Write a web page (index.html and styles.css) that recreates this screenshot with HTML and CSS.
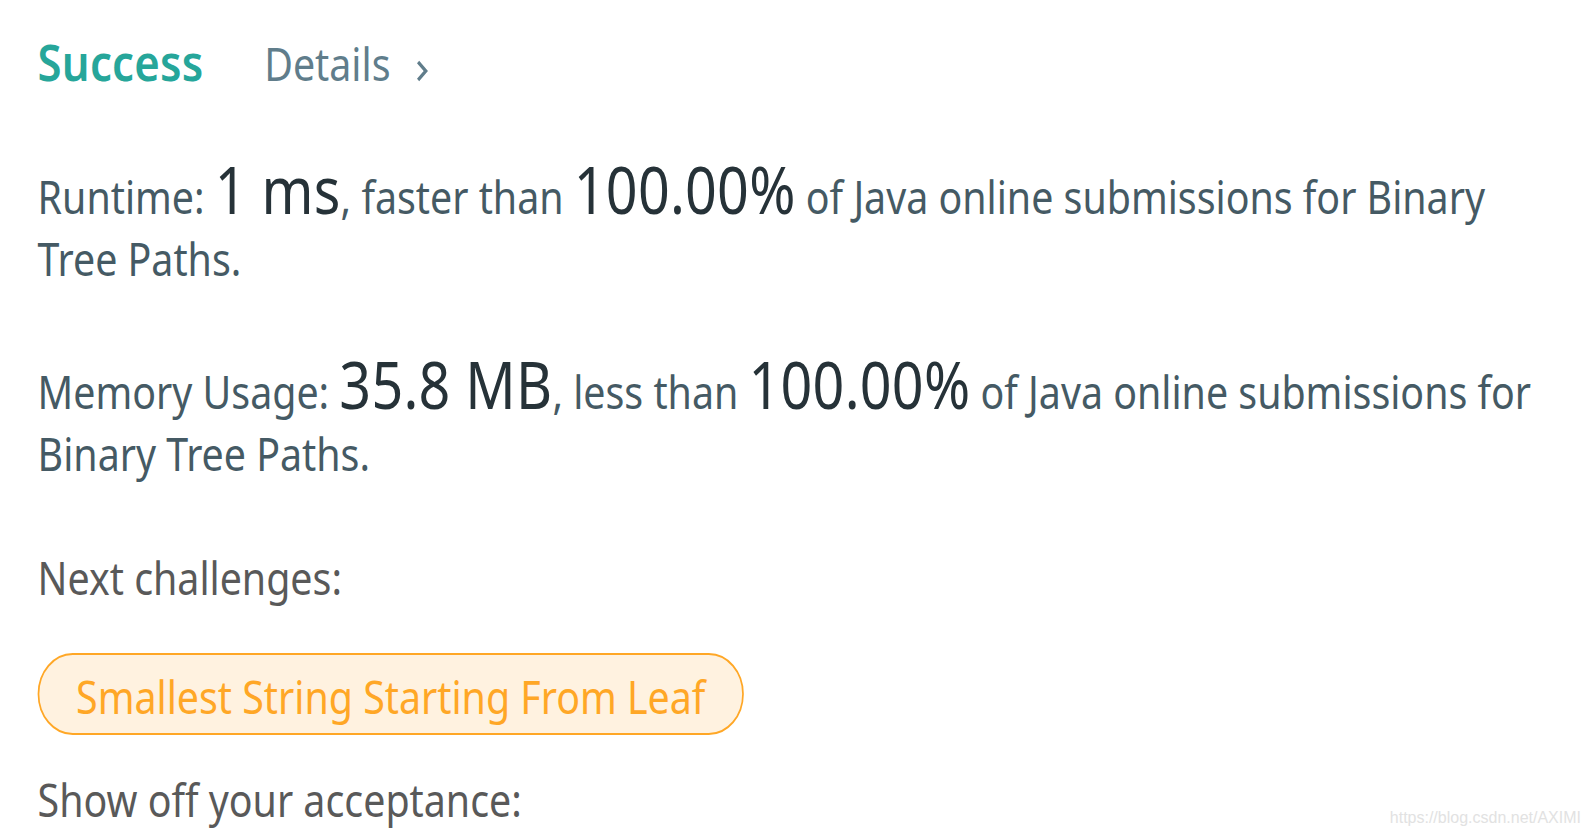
FILE: index.html
```html
<!DOCTYPE html>
<html lang="en">
<head>
  <meta charset="UTF-8">
  <title>Submission Result</title>
  <link rel="stylesheet" href="styles.css">
</head>
<body>
  <div class="frame">
  <div class="result">
    <div class="result-head">
      <span class="status">Success</span>
      <a class="details" href="#">Details
        <svg class="chevron" viewBox="0 0 16 22" width="16" height="22">
          <path d="M3 2 L12 11 L3 20" fill="none" stroke="currentColor" stroke-width="3.6"/>
        </svg>
      </a>
    </div>

    <p class="stat">Runtime: <span class="num">1 ms</span>, faster than <span class="num">100.00%</span> of Java online submissions for Binary Tree Paths.</p>
    <p class="stat">Memory Usage: <span class="num">35.8 MB</span>, less than <span class="num">100.00%</span> of Java online submissions for Binary Tree Paths.</p>

    <div class="label">Next challenges:</div>
    <div class="challenges">
      <a class="challenge" href="#">Smallest String Starting From Leaf</a>
    </div>

    <div class="label share">Show off your acceptance:</div>
  </div>
  </div>
  <div class="watermark">https://blog.csdn.net/AXIMI</div>
</body>
</html>
```

FILE: styles.css
```css
* {
  margin: 0;
  padding: 0;
  box-sizing: border-box;
  font-family: 'Noto Sans', 'Open Sans', sans-serif;
}

body {
  background: #fff;
  height: 100vh;
  overflow: hidden;
}

.frame {
  width: 100%;
  height: 100vh;
  overflow: hidden;
}

/* the whole card is drawn a bit narrow, like the zoomed app view */
.result {
  width: 1824px;
  padding: 26px 0 0 44px;
  transform: scaleX(0.855);
  transform-origin: 0 0;
}

.result-head {
  display: flex;
  align-items: baseline;
  gap: 71px;
  height: 80px;
}

.status {
  font-size: 51px;
  font-weight: 600;
  letter-spacing: 0.3px;
  color: #26a69a;
}

.details {
  display: flex;
  align-items: center;
  gap: 29px;
  font-size: 46px;
  color: #607d8b;
  text-decoration: none;
}

.chevron {
  margin-top: 16px;
}

.stat {
  margin-top: 52px;
  font-size: 46px;
  line-height: 62px;
  color: #455a64;
}

.stat + .stat {
  margin-top: 64px;
}

.num {
  font-size: 65px;
  letter-spacing: 0.3px;
  color: #263238;
}

.label {
  margin-top: 62px;
  font-size: 46px;
  line-height: 62px;
  color: #595959;
}

.label.share {
  margin-top: 0;
}

.challenges {
  margin: 45px 0 33px;
}

.challenge {
  display: inline-block;
  padding: 6px 43px 0;
  height: 82px;
  line-height: 71px;
  border: 2px solid #ffa726;
  border-radius: 41px;
  background: #fff2e0;
  color: #ffa726;
  font-size: 46px;
  text-decoration: none;
}

.watermark {
  position: absolute;
  right: 8px;
  bottom: 9px;
  font-family: 'Liberation Sans', Arial, sans-serif;
  font-size: 16px;
  color: #e2e2e2;
}
```
